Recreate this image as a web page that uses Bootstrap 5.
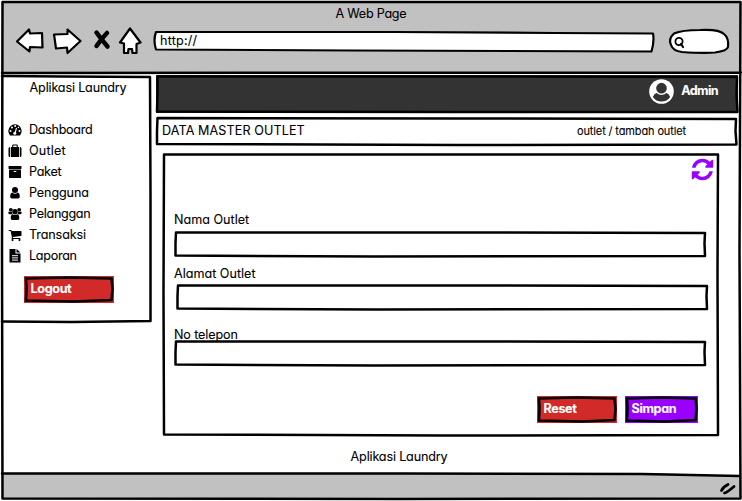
<!DOCTYPE html>
<html lang="id">
<head>
<meta charset="utf-8">
<meta name="viewport" content="width=device-width, initial-scale=1">
<title>Aplikasi Laundry</title>
<link href="https://cdn.jsdelivr.net/npm/bootstrap@5.3.0/dist/css/bootstrap.min.css" rel="stylesheet">
<style>
  body { font: 12.6px/21px Inter, "Open Sans", sans-serif; font-feature-settings: "cv11"; color: #000; width: 742px; height: 501px; overflow: hidden; background: #fff; -webkit-text-stroke: .1px; }
  .sketch { position: absolute; left: 0; top: 0; width: 100%; height: 100%; overflow: visible; fill: none; stroke: #000; stroke-width: 2.5; stroke-linejoin: round; stroke-linecap: round; pointer-events: none; }
  .window { width: 742px; height: 501px; }
  .chrome { height: 73px; background: #c1c1c1; margin: 1px 2px 0 2px; }
  .chrome-title { height: 25px; line-height: 25px; letter-spacing: -.25px; }
  .tools { height: 30px; padding-left: 12px; }
  .address { width: 500px; height: 20px; margin-left: 12px; line-height: 19px; padding-left: 6px; letter-spacing: .2px; }
  .finder { width: 60px; height: 25px; margin-left: 15px; }
  .content { height: 371px; padding-left: 2px; }
  .sidebar { width: 149px; height: 247px; margin-top: 1px; }
  .brand { line-height: 26px; padding-left: 3px; letter-spacing: -.17px; }
  .menu { margin-top: 18px; }
  .menu a { height: 21px; color: #000; padding-left: 6px; gap: 7px; letter-spacing: -.3px; }
  .menu svg { width: 14px; height: 14px; }
  .menu .wider { letter-spacing: .2px; }
  .menu .wide { letter-spacing: -.12px; }
  .key { height: 27px; color: #fff; font-weight: 700; line-height: 25px; padding-left: 6.5px; letter-spacing: -.35px; }
  .red { background: #d12a28; }
  .violet { background: #9a00ff; }
  .key .sketch { stroke-width: 2.6; stroke-linejoin: miter; }
  .logout { width: 90px; margin: 10px 0 0 22px; }
  .reset { width: 80px; }
  .simpan { width: 73px; }
  .main-col { width: 582px; margin-left: 5px; }
  .topbar { height: 38px; background: #333; color: #fff; margin-top: 1px; padding: 0 20px 6px 0; gap: 7px; font-weight: 700; letter-spacing: -.6px; }
  .topbar span { padding-bottom: 1px; }
  .crumbs { height: 29px; margin-top: 4px; padding: 0 52px 2px 6px; letter-spacing: .1px; }
  .trail { font-size: 11px; letter-spacing: -.13px; padding-top: 2px; }
  .panel { width: 556px; height: 282px; margin: 7px 0 0 7px; padding-left: 11px; }
  .reload { width: 25px; height: 25px; margin: 4px 4px 0 auto; }
  .field { height: 25px; width: 532px; }
  .field-first { margin-top: 1px; }
  .field-second { margin-left: 2px; }
  .field-third { margin-top: -5px; }
  .label-a { margin-top: 27px; }
  .label-b { margin-top: 7px; }
  .label-c { margin-top: 15px; letter-spacing: -.12px; }
  .actions { margin-top: 31px; padding-right: 21px; }
  .foot-text { height: 28px; line-height: 24px; padding-left: 56px; letter-spacing: -.17px; }
  .status { height: 26px; background: #c1c1c1; margin: 0 2px; }
</style>
</head>
<body>
<div class="window position-relative d-flex flex-column">
  <header class="chrome">
    <div class="chrome-title text-center">A Web Page</div>
    <div class="tools d-flex align-items-center">
      <svg width="128" height="30" viewBox="14 22 128 30" fill="#fff" stroke="#000" stroke-width="2.2" stroke-linejoin="round">
        <path d="M17 37.500 29 25.500 30 29.500 42 29 42.500 43.500 30 43 29.500 47.500Z"/>
        <path d="M54 30.500 67.500 30 67.500 25.500 80.500 37 67.500 49 67 43.500 56 44.500Q55 37 54 30.500Z"/>
        <path d="M96.500 28.500Q101 35 107.500 42.500M107 29Q102 34 96.500 42" stroke-width="4.500" stroke-linecap="round" fill="none"/>
        <path d="M130 24.500 140.500 38.500 136.500 40 136.500 49 132.500 49 132 45 128.500 45 128 49 124 49 124 39.500 120 38.500Z"/>
      </svg>
      <div class="address position-relative">
        <svg class="sketch" viewBox="0 0 500 20"><path fill="#fff" stroke-width="2.2" d="M2 1 240 1 400 2 499 2.500Q500.500 10 497.500 20.500L200 19.500 2 18.500Q-1 9 2 1Z"/></svg>
        <span class="position-relative">http://</span>
      </div>
      <div class="finder position-relative">
        <svg class="sketch" viewBox="0 0 60 25"><path fill="#fff" stroke-width="2.2" d="M5 4.500Q13 1 31 1 50 0 55 5 60 9 59 18 58 22 46 23.500 35 24.500 13 23 4 22 2 16-1 10 5 4.500Z"/><circle cx="10" cy="12.500" r="3.600" stroke-width="1.800"/><path d="M12 15 14 18" stroke-width="2.200"/></svg>
      </div>
    </div>
  </header>

  <div class="content d-flex align-items-start">
    <aside class="sidebar position-relative">
      <svg class="sketch" viewBox="0 0 149 247"><path d="M0 1 60 1.500 148 2 148.500 120 148.500 246 70 247 0 246.500"/></svg>
      <div class="brand text-center">Aplikasi Laundry</div>
      <nav class="menu nav flex-column">
        <a class="d-flex align-items-center text-decoration-none" href="#"><svg viewBox="0 0 14 14"><path d="M2 12.500A6.700 6.700 0 1 1 12 12.500Z"/><g fill="#fff"><circle cx="2.500" cy="8" r="1"/><circle cx="4" cy="4.500" r="1"/><circle cx="7.200" cy="3" r="1"/><circle cx="11.500" cy="8" r="1"/><circle cx="10.400" cy="4.500" r=".8"/></g><path d="M7 10.500 8.500 5" stroke="#fff" stroke-width="1.100"/><circle cx="6.800" cy="10.300" r="1.500" fill="#fff"/></svg><span>Dashboard</span></a>
        <a class="d-flex align-items-center text-decoration-none wider" href="#"><svg viewBox="0 0 14 14"><path d="M.5 4.500Q.5 3 2 3H2.200V13H2Q.5 13 .5 11.500ZM3 3H4.200V1.500Q4.200.5 5.200.5H8.800Q9.800.5 9.800 1.500V3H11V13H3ZM5.300 3H8.700V1.600H5.300ZM11.800 3H12Q13.500 3 13.500 4.500V11.500Q13.500 13 12 13H11.800Z" fill-rule="evenodd"/></svg><span>Outlet</span></a>
        <a class="d-flex align-items-center text-decoration-none" href="#"><svg viewBox="0 0 1792 1792"><path d="M1088 832q0-26-19-45t-45-19h-256q-26 0-45 19t-19 45 19 45 45 19h256q26 0 45-19t19-45zm576-192v960q0 26-19 45t-45 19h-1408q-26 0-45-19t-19-45v-960q0-26 19-45t45-19h1408q26 0 45 19t19 45zm64-448v256q0 26-19 45t-45 19h-1536q-26 0-45-19t-19-45v-256q0-26 19-45t45-19h1536q26 0 45 19t19 45z"/></svg><span>Paket</span></a>
        <a class="d-flex align-items-center text-decoration-none wide" href="#"><svg viewBox="0 0 14 14"><circle cx="7" cy="4" r="3"/><path d="M4.300 6.500Q7 9 9.700 6.500 11.800 7 11.800 10.500 11.800 12.500 10.200 12.500H3.800Q2.200 12.500 2.200 10.500 2.200 7 4.300 6.500Z"/></svg><span>Pengguna</span></a>
        <a class="d-flex align-items-center text-decoration-none" href="#"><svg viewBox="0 0 14 14"><circle cx="2.800" cy="2.800" r="1.900"/><circle cx="11.200" cy="2.800" r="1.900"/><circle cx="7" cy="4.800" r="2.700"/><path d="M1 4.500Q2.500 5.500 4 4.800 3.800 6 4.500 7.200H1.500Q.3 7 .3 6 .3 4.800 1 4.500ZM13 4.500Q11.500 5.500 10 4.800 10.200 6 9.500 7.200H12.500Q13.700 7 13.700 6 13.700 4.800 13 4.500ZM4.700 7.200Q7 9 9.300 7.200 11.300 7.700 11.300 11 11.300 13 9.700 13H4.300Q2.700 13 2.700 11 2.700 7.700 4.700 7.200Z"/></svg><span>Pelanggan</span></a>
        <a class="d-flex align-items-center text-decoration-none wide" href="#"><svg viewBox="0 0 1792 1792"><path d="M704 1536q0 52-38 90t-90 38-90-38-38-90 38-90 90-38 90 38 38 90zm896 0q0 52-38 90t-90 38-90-38-38-90 38-90 90-38 90 38 38 90zm128-1088v512q0 24-16.500 42.500t-40.500 21.500l-1044 122q13 60 13 70 0 16-24 64h920q26 0 45 19t19 45-19 45-45 19h-1024q-26 0-45-19t-19-45q0-11 8-31.500t16-36 21.500-40 15.500-29.500l-177-823h-204q-26 0-45-19t-19-45 19-45 45-19h256q16 0 28.500 6.500t19.500 15.500 13 24.500 8 26 5.500 29.500 4.500 26h1201q26 0 45 19t19 45z"/></svg><span>Transaksi</span></a>
        <a class="d-flex align-items-center text-decoration-none" href="#"><svg viewBox="0 0 14 14"><path d="M1.500 0H7.500V4.500H12.500V13.500H1.500ZM8.500 0 12.500 3.500H8.500Z"/><path d="M4 6.700H10M4 8.900H10M4 11.100H10" stroke="#fff"/></svg><span>Laporan</span></a>
      </nav>
      <div class="key red logout position-relative"><svg class="sketch" viewBox="0 0 90 27"><path d="M2 2.500 45 1.500 87.500 2.500 88.500 13 87.500 24 50 25.500 2 24.500 2.500 12Z"/></svg>Logout</div>
    </aside>

    <main class="main-col">
      <div class="topbar position-relative d-flex align-items-center justify-content-end">
        <svg class="sketch" viewBox="0 0 582 38"><path d="M1.500 1.500 300 1.500 581 2 580.500 20 581.500 37 300 37 1 36.500 1.500 18Z"/></svg>
        <svg width="25" height="25" viewBox="0 0 25 25"><circle cx="12.500" cy="12.500" r="12.300" fill="#fff"/><path d="M3.800 18Q5 14.500 8 13.800 12.500 17 17 13.800 20 14.500 21.200 18 18 22.500 12.500 22.500 7 22.500 3.800 18Z" fill="#333"/><circle cx="12.500" cy="9.200" r="6" fill="#333" stroke="#fff" stroke-width="1.300"/></svg>
        <span>Admin</span>
      </div>
      <div class="crumbs position-relative d-flex align-items-center justify-content-between">
        <svg class="sketch" viewBox="0 0 582 29"><path d="M1.500 1 300 1.500 580 2 579.500 14 580.500 27.500 300 28 1 27 1 14Z"/></svg>
        <span>DATA MASTER OUTLET</span>
        <span class="trail">outlet / tambah outlet</span>
      </div>
      <section class="panel position-relative">
        <svg class="sketch" viewBox="0 0 556 282"><path d="M1 1.500 555 1.500 554.500 120 555 282 280 282.500 1 281.500 .5 140Z"/></svg>
        <div class="d-flex"><svg class="reload" viewBox="0 0 1792 1792" fill="#9a00ff"><path d="M1639 1056q0 5-1 7-64 268-268 434.500t-478 166.500q-146 0-282.500-55t-243.500-157l-129 129q-19 19-45 19t-45-19-19-45v-448q0-26 19-45t45-19h448q26 0 45 19t19 45-19 45l-137 137q71 66 161 102t187 36q134 0 250-65t186-179q11-17 53-117 8-23 30-23h192q13 0 22.500 9.500t9.500 22.500zm25-800v448q0 26-19 45t-45 19h-448q-26 0-45-19t-19-45 19-45l138-138q-148-137-349-137-134 0-250 65t-186 179q-11 17-53 117-8 23-30 23h-199q-13 0-22.500-9.500t-9.500-22.500v-7q65-268 270-434.500t480-166.500q146 0 284 55.500t245 156.500l130-129q19-19 45-19t45 19 19 45z"/></svg></div>
        <div class="label-a">Nama Outlet</div>
        <div class="field field-first position-relative"><svg class="sketch" viewBox="0 0 532 25"><path d="M2 1.500 300 1.500 531 2 530.500 12 531 25 200 25.500 1.500 24.500 1.500 12Z"/></svg></div>
        <div class="label-b">Alamat Outlet</div>
        <div class="field field-second position-relative"><svg class="sketch" viewBox="0 0 532 25"><path d="M2 1.500 300 1.500 531 2 530.500 12 531 25 200 25.500 1.500 24.500 1.500 12Z"/></svg></div>
        <div class="label-c">No telepon</div>
        <div class="field field-third position-relative"><svg class="sketch" viewBox="0 0 532 25"><path d="M2 1.500 300 1.500 531 2 530.500 12 531 25 200 25.500 1.500 24.500 1.500 12Z"/></svg></div>
        <div class="actions d-flex gap-2 justify-content-end">
          <div class="key red reset position-relative"><svg class="sketch" viewBox="0 0 80 27"><path d="M2 2.500 40 1.500 77.500 2.500 78.500 13 77.500 24 45 25.500 2 24.500 2.500 12Z"/></svg>Reset</div>
          <div class="key violet simpan position-relative"><svg class="sketch" viewBox="0 0 73 27"><path d="M2 2.500 36 1.500 70.500 2.500 71.500 13 70.500 24 40 25.500 2 24.500 2.500 12Z"/></svg>Simpan</div>
        </div>
      </section>
    </main>
  </div>
  <div class="foot-text text-center">Aplikasi Laundry</div>
  <footer class="status position-relative">
    <svg class="sketch" viewBox="0 0 738 26"><path stroke="none" fill="#fff" d="M620 -1 738 -1 738 3Z"/><path d="M0 .5 400 .5 640 1 738 3"/><path stroke-width="2.8" d="M719.500 17.500Q721 14 726 11.500M722.500 20Q725 19.500 732 13.500"/></svg>
  </footer>
  <svg class="sketch" viewBox="0 0 742 501"><path d="M2.500 2 740.500 2 739.500 250 740.500 498.500 400 499 2.500 498.500 2 250ZM2 73 741 72.500"/></svg>
</div>
<script src="https://cdn.jsdelivr.net/npm/bootstrap@5.3.0/dist/js/bootstrap.bundle.min.js"></script>
</body>
</html>
